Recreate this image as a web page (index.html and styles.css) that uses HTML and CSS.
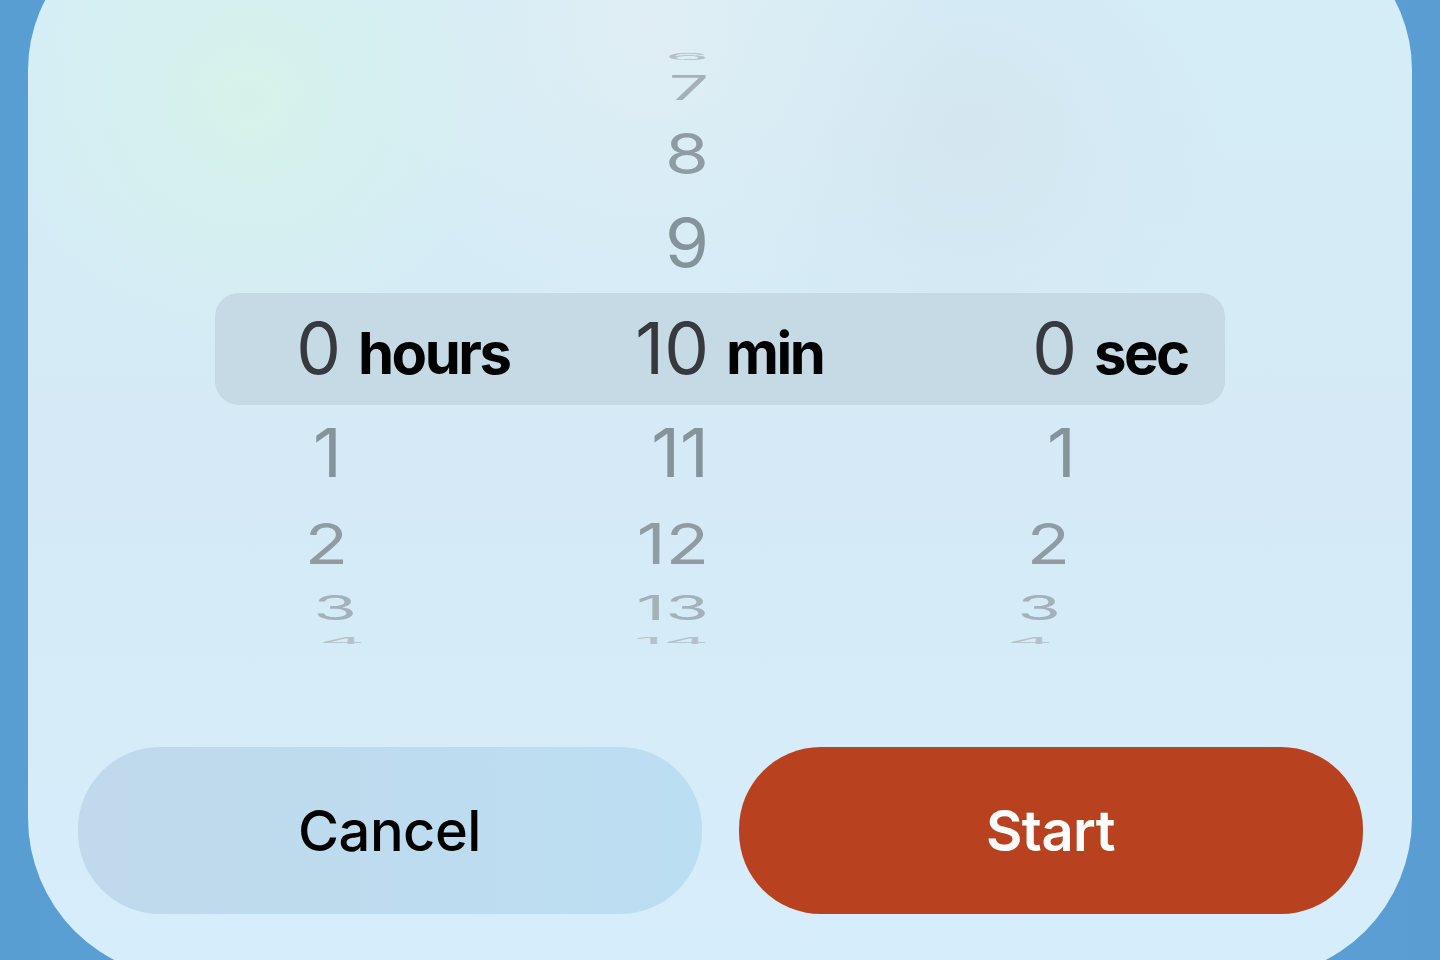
FILE: index.html
```html
<!DOCTYPE html>
<html lang="en">
<head>
    <meta charset="UTF-8">
    <meta name="viewport" content="width=device-width, initial-scale=1.0">
    <title>Timer</title>
    <link rel="stylesheet" href="styles.css">
</head>
<body>
    <div class="sheet">
        <div class="picker">
            <div class="band"></div>
            <div class="columns">
                <div class="col lean-right">
                    <div class="wheel">
                        <span class="slot s4"></span>
                        <span class="slot s3"></span>
                        <span class="slot s2"></span>
                        <span class="slot s1"></span>
                        <span class="slot s0">0</span>
                        <span class="slot s1 below">1</span>
                        <span class="slot s2 below">2</span>
                        <span class="slot s3 below">3</span>
                        <span class="slot s4 below">4</span>
                    </div>
                    <span class="unit">hours</span>
                </div>
                <div class="col">
                    <div class="wheel">
                        <span class="slot s4">6</span>
                        <span class="slot s3">7</span>
                        <span class="slot s2">8</span>
                        <span class="slot s1">9</span>
                        <span class="slot s0">10</span>
                        <span class="slot s1 below">11</span>
                        <span class="slot s2 below">12</span>
                        <span class="slot s3 below">13</span>
                        <span class="slot s4 below">14</span>
                    </div>
                    <span class="unit">min</span>
                </div>
                <div class="col lean-left">
                    <div class="wheel">
                        <span class="slot s4"></span>
                        <span class="slot s3"></span>
                        <span class="slot s2"></span>
                        <span class="slot s1"></span>
                        <span class="slot s0">0</span>
                        <span class="slot s1 below">1</span>
                        <span class="slot s2 below">2</span>
                        <span class="slot s3 below">3</span>
                        <span class="slot s4 below">4</span>
                    </div>
                    <span class="unit">sec</span>
                </div>
            </div>
        </div>
        <div class="actions">
            <button type="button" class="btn cancel">Cancel</button>
            <button type="button" class="btn start">Start</button>
        </div>
    </div>
</body>
</html>
```

FILE: styles.css
```css
body {
    margin: 0;
    height: 960px;
    overflow: hidden;
    font-family: Inter, "Liberation Sans", sans-serif;
    background: linear-gradient(90deg, #599ed3, #5ea4d9 50%, #5a9dd2);
}
.sheet {
    box-sizing: border-box;
    width: 1384px;
    height: 1058px;
    margin: -80px 0 0 28px;
    padding-top: 132px;
    border-radius: 150px 150px 160px 160px;
    display: flex;
    flex-direction: column;
    align-items: center;
    background:
        radial-gradient(circle at 16% 17%, rgba(214, 244, 232, 0.85), rgba(214, 244, 232, 0) 18%),
        radial-gradient(circle at 45% 10%, rgba(226, 238, 243, 0.8), rgba(226, 238, 243, 0) 25%),
        radial-gradient(circle at 68% 20%, rgba(212, 228, 238, 0.7), rgba(212, 228, 238, 0) 20%),
        linear-gradient(180deg, #d4eef7, #d5eaf6 50%, #d6edfb);
}
.picker {
    width: 1010px;
    display: grid;
}
.band {
    grid-area: 1 / 1;
    align-self: center;
    height: 112px;
    border-radius: 24px;
    background: #c6dae6;
}
.columns {
    grid-area: 1 / 1;
    display: grid;
    grid-template-columns: 368px 368px 1fr;
    padding-left: 16px;
}
.col {
    --lean: 0;
    display: flex;
    align-items: center;
}
.lean-right {
    --lean: 1;
}
.lean-left {
    --lean: -1;
}
.wheel {
    width: 110px;
    display: flex;
    flex-direction: column;
    font-size: 71px;
    line-height: 1;
}
.slot {
    display: flex;
    align-items: center;
    justify-content: flex-end;
    overflow: visible;
    white-space: nowrap;
}
.s0 {
    height: 105px;
    color: #36393d;
}
.s1 {
    height: 105px;
    color: #85939b;
    transform: translateX(calc(var(--lean) * 1px)) scaleY(0.94);
}
.s2 {
    height: 75px;
    color: #8f9ca4;
    transform: translateX(calc(var(--lean) * 7px)) scaleY(0.8);
}
.s3 {
    height: 55px;
    color: #a4b1b9;
    transform: translateX(calc(var(--lean) * 16px)) scaleY(0.47);
}
.s4 {
    height: 9px;
    color: #b4c1c8;
    transform: translateX(calc(var(--lean) * 24px)) scaleY(0.12);
}
.unit {
    margin: 8px 0 0 17px;
    font-size: 58px;
    font-weight: 700;
    letter-spacing: -2.5px;
    color: #000;
}
.actions {
    margin-top: 102px;
    display: flex;
    gap: 37px;
}
.btn {
    width: 624px;
    height: 167px;
    border: none;
    border-radius: 82px;
    font-family: Inter, "Liberation Sans", sans-serif;
    font-size: 56px;
    letter-spacing: -0.5px;
    cursor: pointer;
}
.cancel {
    background: linear-gradient(90deg, #c0d9ec, #bcdef2);
    color: #000;
    font-weight: 500;
}
.start {
    background: #b8411f;
    color: #fff;
    font-weight: 600;
}
```
